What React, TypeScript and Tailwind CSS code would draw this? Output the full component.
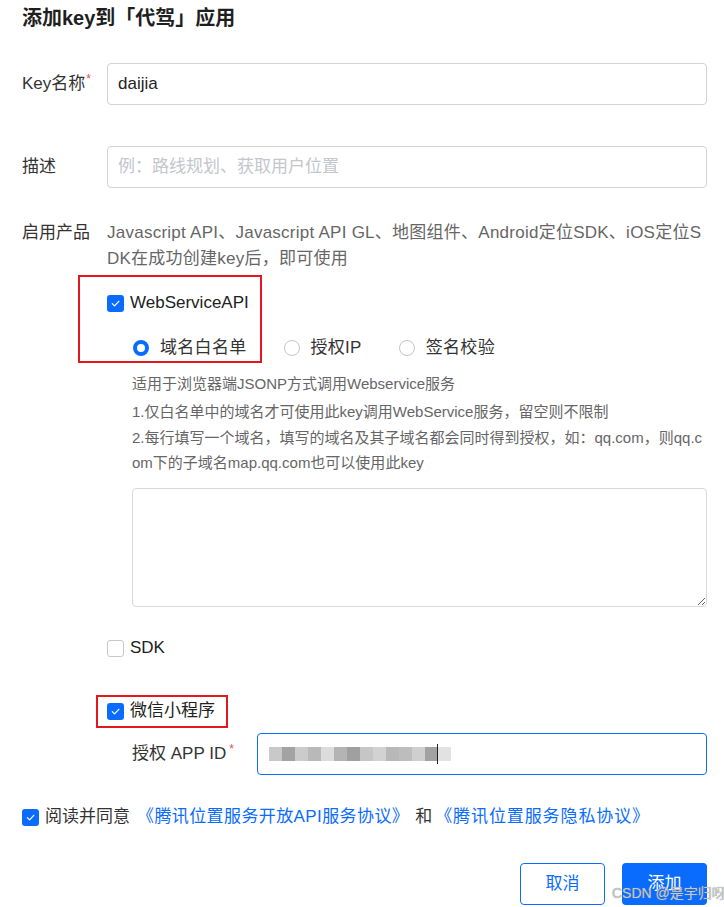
const font = { fontFamily: '"Liberation Sans", "Noto Sans CJK SC", sans-serif' }

function Check({ on }: { on: boolean }) {
  return on ? (
    <span className="flex h-[17px] w-[17px] shrink-0 items-center justify-center rounded-[3px] bg-[#0a6cff]">
      <svg width="11" height="11" viewBox="0 0 12 12" fill="none">
        <path d="M2.5 6.2 L5 8.6 L9.6 3.6" stroke="#fff" strokeWidth="1.3" strokeLinecap="round" strokeLinejoin="round" />
      </svg>
    </span>
  ) : (
    <span className="h-[17px] w-[17px] shrink-0 rounded-[3px] border border-[#c9c9c9] bg-white" />
  )
}

function Radio({ on, label }: { on: boolean; label: string }) {
  return (
    <div className="flex items-center gap-[11px]">
      {on ? (
        <span className="h-[16px] w-[16px] rounded-full border-[4.5px] border-[#0a6cff] bg-white" />
      ) : (
        <span className="h-[16px] w-[16px] rounded-full border border-[#c5c5c5] bg-white" />
      )}
      <span className="text-[17px] tracking-[0.3px] text-[#333]">{label}</span>
    </div>
  )
}

const blocks = ["#c9c9c9", "#a3a3a3", "#cbcbcb", "#b9b9b9", "#dcdcdc", "#b4b4b4", "#a0a0a0", "#c6c6c6", "#d2d2d2", "#b8b8b8", "#bdbdbd", "#cfcfcf", "#a2a2a2", "#e2e2e2"]

export default function App() {
  return (
    <div className="relative min-h-[907px] w-[724px] bg-white pl-[22px] pr-[17px] pt-[4px] [text-spacing-trim:space-all]" style={font}>
      <h1 className="text-[20px] font-bold leading-[28px] text-[#1f1f1f]">添加key到「代驾」应用</h1>

      <div className="mt-[31px] flex items-center">
        <div className="w-[85px] shrink-0 text-[17px] text-[#333]">
          Key名称<span className="relative -top-[6px] ml-[1px] text-[12px] text-[#e34d59]">*</span>
        </div>
        <div className="flex h-[42px] flex-1 items-center rounded-[4px] border border-[#d3d3d3] px-[10px] text-[17px] text-[#222]">daijia</div>
      </div>

      <div className="mt-[41px] flex items-center">
        <div className="w-[85px] shrink-0 text-[17px] text-[#333]">描述</div>
        <div className="flex h-[42px] flex-1 items-center rounded-[4px] border border-[#d3d3d3] px-[10px] text-[17px] text-[#c3c6cc]">例：路线规划、获取用户位置</div>
      </div>

      <div className="mt-[32px] flex">
        <div className="w-[85px] shrink-0 text-[17px] leading-[26px] text-[#333]">启用产品</div>
        <div className="flex-1">
          <p className="break-all text-[17px] leading-[26px] tracking-[0.25px] text-[#666]">
            Javascript API、Javascript API GL、地图组件、Android定位SDK、iOS定位SDK在成功创建key后，即可使用
          </p>

          <div className="relative">
            <div className="pointer-events-none absolute -left-[29px] -top-[15px] h-[88px] w-[184px] border-2 border-[#e5161f]" />
            <div className="mt-[18px] flex h-[26px] items-center gap-[6px]">
              <Check on />
              <span className="text-[17px] text-[#222]">WebServiceAPI</span>
            </div>
            <div className="ml-[26px] mt-[19px] flex h-[26px] items-center gap-[37px]">
              <Radio on label="域名白名单" />
              <Radio on={false} label="授权IP" />
              <Radio on={false} label="签名校验" />
            </div>
          </div>

          <div className="ml-[25px] mt-[10px] text-[15px] text-[#666]">
            <p className="mb-[2px] leading-[26px]">适用于浏览器端JSONP方式调用Webservice服务</p>
            <p className="leading-[26px]">1.仅白名单中的域名才可使用此key调用WebService服务，留空则不限制</p>
            <p className="break-all leading-[25px]">2.每行填写一个域名，填写的域名及其子域名都会同时得到授权，如：qq.com，则qq.com下的子域名map.qq.com也可以使用此key</p>
            <textarea className="mt-[13px] block h-[119px] w-full rounded-[4px] border border-[#d9d9d9] outline-none" />
          </div>

          <div className="mt-[28px] flex h-[26px] items-center gap-[6px]">
            <Check on={false} />
            <span className="text-[17px] text-[#222]">SDK</span>
          </div>

          <div className="relative">
            <div className="pointer-events-none absolute -left-[11px] -top-[3px] h-[33px] w-[132px] border-2 border-[#e5161f]" />
            <div className="mt-[37px] flex h-[26px] items-center gap-[6px]">
              <Check on />
              <span className="text-[17px] text-[#222]">微信小程序</span>
            </div>
          </div>

          <div className="ml-[25px] mt-[9px] flex items-center">
            <div className="w-[125px] shrink-0 text-[17px] text-[#333]">
              授权 APP ID<span className="relative -top-[6px] ml-[3px] text-[12px] text-[#e34d59]">*</span>
            </div>
            <div className="relative flex h-[42px] flex-1 items-center rounded-[4px] border border-[#0a6cff] pl-[11px]">
              <div className="flex">
                {blocks.map((c, i) => (
                  <span key={i} className="h-[14px] w-[13px]" style={{ background: c }} />
                ))}
              </div>
              <span className="ml-[-14px] h-[20px] w-px bg-[#222]" />
            </div>
          </div>
        </div>
      </div>

      <div className="mt-[29px] flex h-[26px] items-center text-[17px]">
        <Check on />
        <span className="ml-[6px] text-[#333]">阅读并同意</span>
        <span className="ml-[7px] tracking-[0.4px] text-[#0a6cff]">《腾讯位置服务开放API服务协议》</span>
        <span className="ml-[6px] mr-[3px] text-[#333]">和</span>
        <span className="tracking-[0.9px] text-[#0a6cff]">《腾讯位置服务隐私协议》</span>
      </div>

      <div className="mt-[33px] flex justify-end gap-[17px]">
        <button className="h-[42px] w-[85px] rounded-[4px] border border-[#0a6cff] bg-white text-[17px] text-[#0a6cff]">取消</button>
        <button className="h-[42px] w-[85px] rounded-[4px] bg-[#0a6cff] text-[17px] text-white">添加</button>
      </div>

      <div className="pointer-events-none absolute left-[612px] top-[883px] whitespace-nowrap text-[14px] text-[#c8c8c8]" style={{ textShadow: "0 0 1px #888" }}>
        CSDN @是宇归呀
      </div>
    </div>
  )
}
